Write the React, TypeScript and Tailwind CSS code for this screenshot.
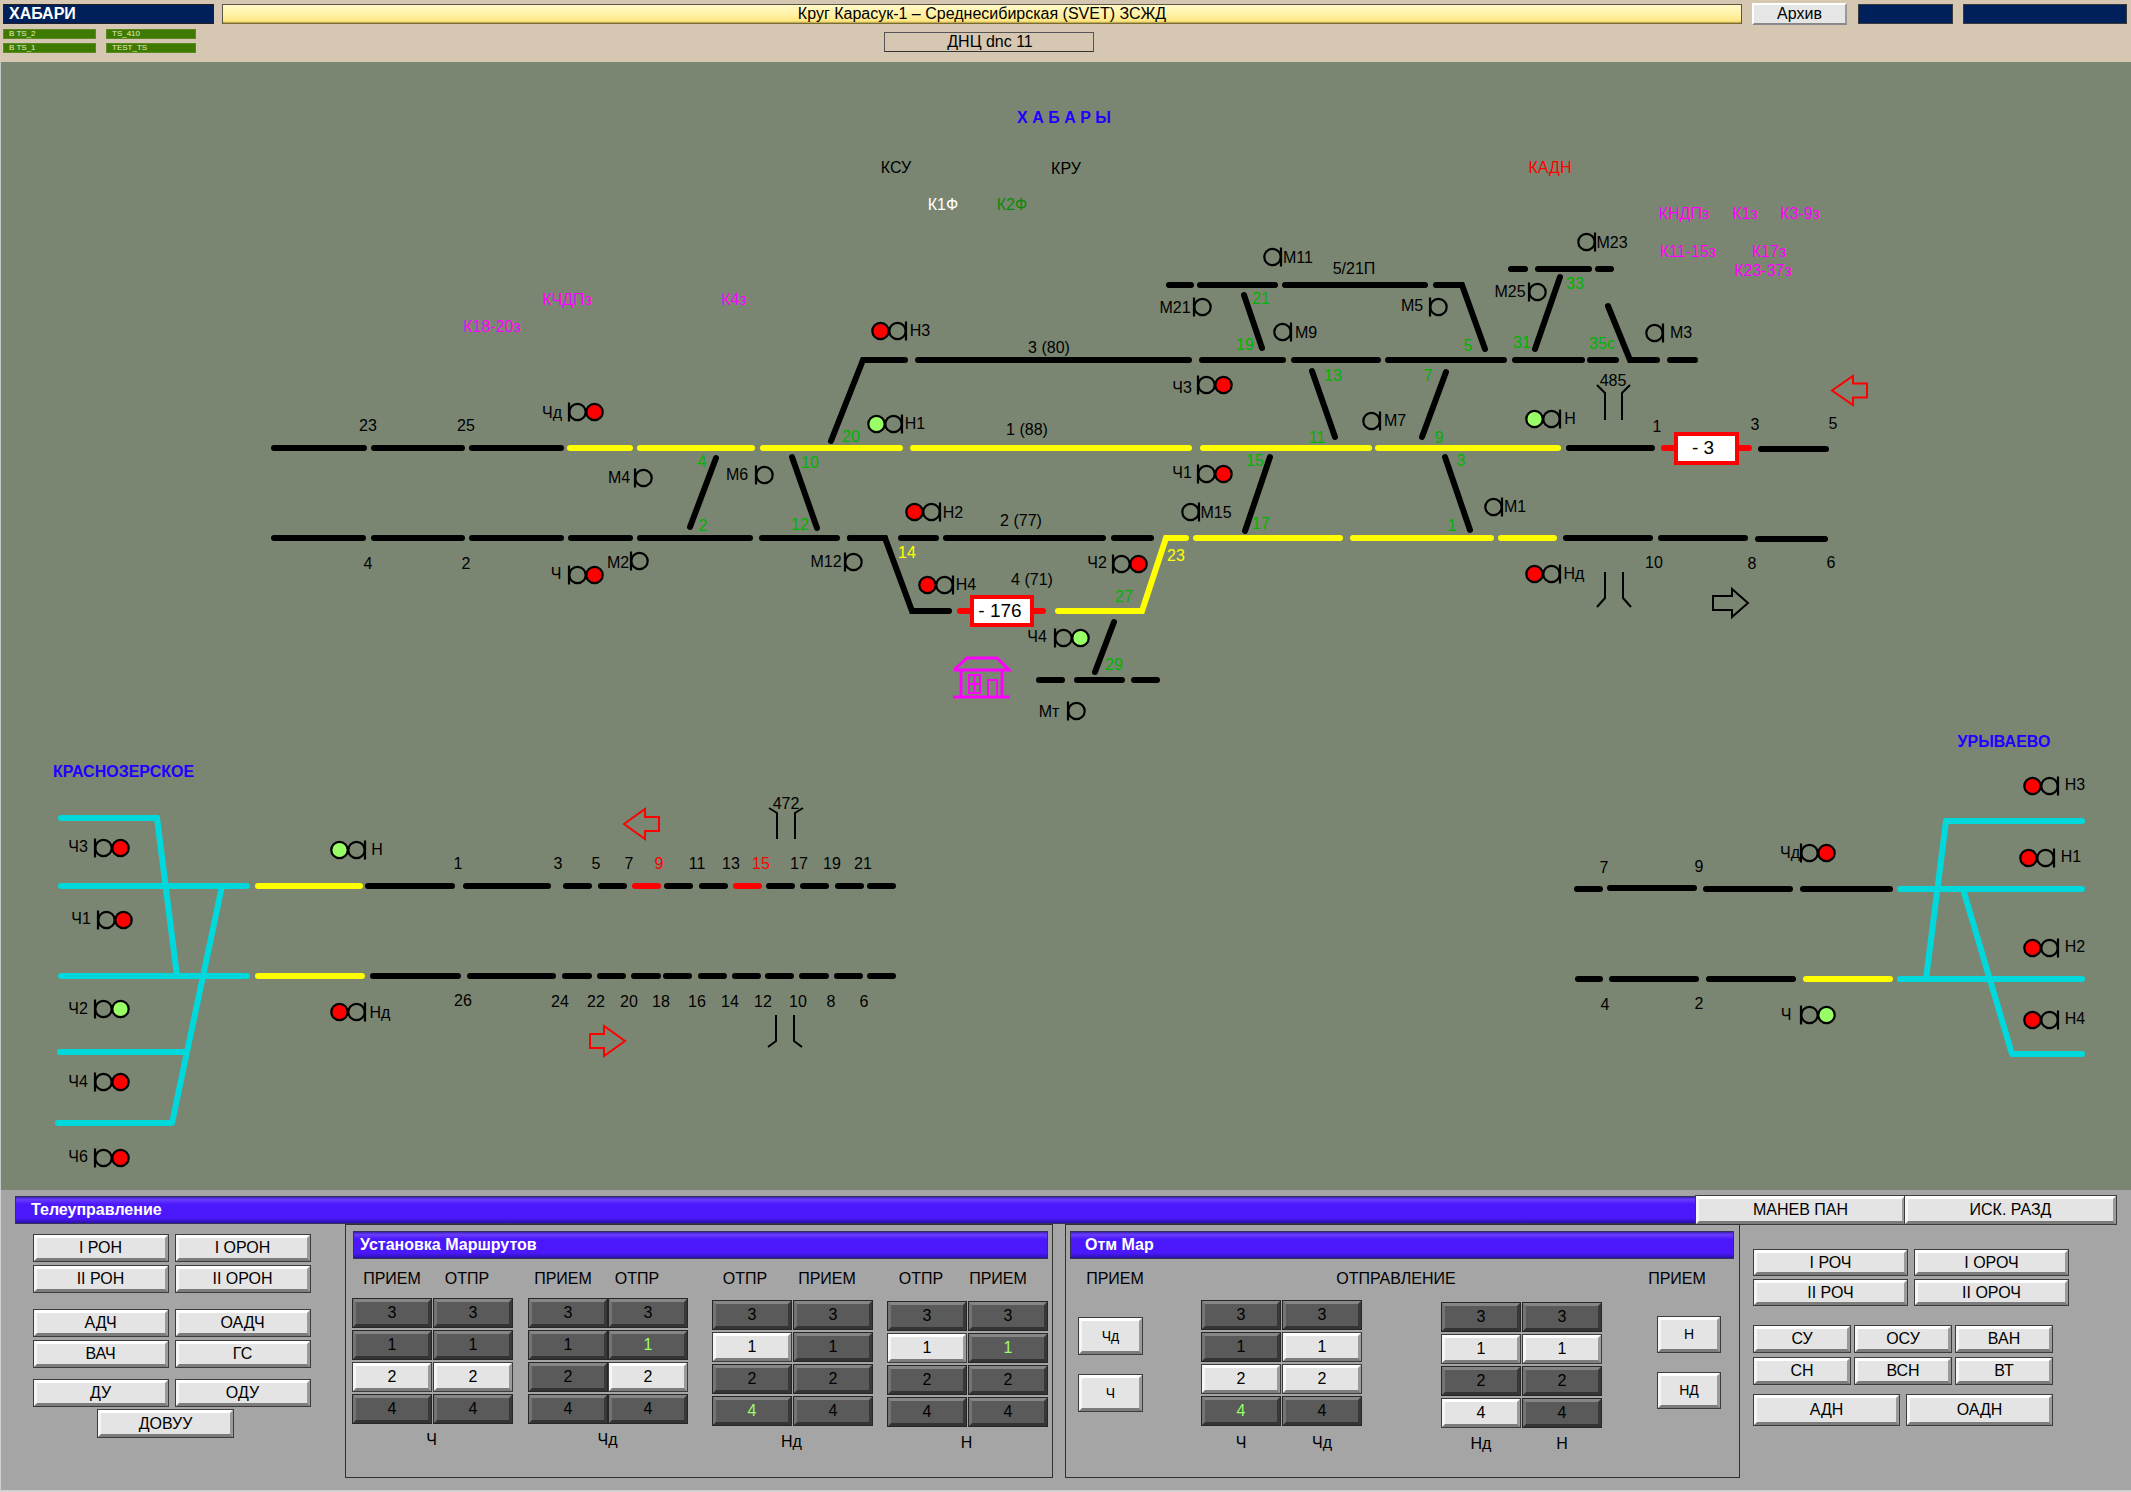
const BLK = '#000000'
const YEL = '#ffff00'
const RED = '#ff0000'
const CYAN = '#00d8dc'
const GRN = '#00b400'
const MAG = '#ff00ff'
const BLUE = '#2000ff'
const LIME = '#99ff66'

// y, x1, x2, colour: x values are the outer ends of the rounded bar
const segments: [number, number, number, string][] = [
  // row 1
  [448, 271, 367, BLK], [448, 371, 465, BLK], [448, 469, 564, BLK], [448, 567, 633, YEL], [448, 637, 755, YEL],
  [448, 760, 903, YEL], [448, 910, 1192, YEL], [448, 1200, 1372, YEL], [448, 1375, 1561, YEL], [448, 1566, 1655, BLK],
  [448, 1661, 1680, RED], [448, 1735, 1752, RED], [449, 1758, 1829, BLK],
  // row 2
  [538, 271, 366, BLK], [538, 371, 465, BLK], [538, 469, 564, BLK], [538, 568, 633, BLK], [538, 637, 753, BLK],
  [538, 759, 840, BLK], [538, 847, 888, BLK], [538, 898, 939, BLK], [538, 943, 1106, BLK], [538, 1111, 1154, BLK],
  [538, 1193, 1343, YEL], [538, 1350, 1494, YEL], [538, 1498, 1557, YEL], [538, 1563, 1653, BLK], [538, 1658, 1748, BLK],
  [539, 1755, 1828, BLK],
  // ways 3, 5 and the stub lines
  [360, 915, 1192, BLK], [360, 1199, 1286, BLK], [360, 1291, 1381, BLK], [360, 1385, 1507, BLK], [360, 1512, 1585, BLK],
  [360, 1587, 1619, BLK], [360, 1667, 1698, BLK], [285, 1166, 1194, BLK], [285, 1197, 1278, BLK], [285, 1282, 1428, BLK],
  [269, 1508, 1528, BLK], [269, 1535, 1592, BLK], [269, 1595, 1614, BLK],
  [611, 957, 975, RED], [611, 1030, 1046, RED], [680, 1036, 1065, BLK], [680, 1074, 1125, BLK], [680, 1131, 1160, BLK],
  // left station
  [818, 58, 160, CYAN], [886, 58, 250, CYAN], [976, 58, 250, CYAN], [1052, 57, 188, CYAN], [1123, 55, 174, CYAN],
  [886, 255, 363, YEL], [886, 365, 455, BLK], [886, 463, 551, BLK], [886, 563, 592, BLK], [886, 598, 627, BLK],
  [886, 632, 661, RED], [886, 664, 693, BLK], [886, 699, 728, BLK], [886, 733, 762, RED], [886, 766, 795, BLK],
  [886, 800, 829, BLK], [886, 835, 864, BLK], [886, 867, 896, BLK],
  [976, 255, 365, YEL], [976, 370, 461, BLK], [976, 467, 556, BLK], [976, 562, 592, BLK], [976, 597, 626, BLK],
  [976, 631, 661, BLK], [976, 663, 692, BLK], [976, 698, 727, BLK], [976, 732, 761, BLK], [976, 765, 794, BLK],
  [976, 799, 829, BLK], [976, 834, 863, BLK], [976, 867, 896, BLK],
  // right station
  [889, 1574, 1603, BLK], [888, 1607, 1697, BLK], [889, 1703, 1793, BLK], [889, 1800, 1893, BLK], [889, 1897, 2085, CYAN],
  [979, 1575, 1603, BLK], [979, 1609, 1699, BLK], [979, 1706, 1796, BLK], [979, 1803, 1893, YEL], [979, 1897, 2085, CYAN],
  [821, 1943, 2085, CYAN], [1054, 2010, 2085, CYAN],
]

const paths: [string, string][] = [
  ['831,441 863,360 905,360', BLK],
  ['850,538 885,538 912,611 949,611', BLK],
  ['1058,611 1142,611 1166,538 1186,538', YEL],
  ['1436,285 1462,285 1485,349', BLK],
  ['1608,306 1630,360 1657,360', BLK],
  ['1560,277 1535,349', BLK], ['1244,295 1262,348', BLK], ['1312,371 1335,437', BLK], ['1446,372 1422,437', BLK],
  ['1270,457 1245,531', BLK], ['1445,457 1470,530', BLK], ['1114,622 1095,672', BLK], ['716,458 690,527', BLK],
  ['792,457 817,528', BLK],
  ['157,818 177,976', CYAN], ['222,886 172,1123', CYAN], ['1946,821 1926,979', CYAN], ['1963,889 2012,1054', CYAN],
]

// bar x, centre y, side the lamps stand on, lit lamp
const signals: [number, number, 1 | -1, string?][] = [
  [569, 412, 1, RED], [902, 424, -1, LIME], [906, 331, -1, RED], [635, 478, 1], [756, 475, 1], [940, 512, -1, RED],
  [631, 561, 1], [569, 575, 1, RED], [845, 562, 1], [953, 585, -1, RED], [1281, 257, -1], [1595, 242, -1], [1194, 307, 1],
  [1291, 332, -1], [1430, 307, 1], [1529, 292, 1], [1198, 385, 1, RED], [1380, 421, -1], [1560, 419, -1, LIME],
  [1198, 474, 1, RED], [1199, 512, -1], [1502, 507, -1], [1113, 564, 1, RED], [1055, 638, 1, LIME], [1068, 711, 1],
  [1560, 574, -1, RED], [1663, 333, -1],
  [95, 848, 1, RED], [98, 920, 1, RED], [95, 1009, 1, LIME], [95, 1082, 1, RED], [95, 1158, 1, RED], [365, 850, -1, LIME],
  [365, 1012, -1, RED],
  [2058, 786, -1, RED], [2054, 858, -1, RED], [2058, 948, -1, RED], [2058, 1020, -1, RED], [1801, 853, 1, RED], [1801, 1015, 1, LIME],
]

const labels: [string, number, number, string?][] = [
  ['КЧДПз', 567, 299, MAG], ['К4з', 734, 299, MAG], ['К18-20з', 492, 326, MAG], ['КНДПз', 1684, 213, MAG], ['К1з', 1745, 213, MAG],
  ['К3-9з', 1800, 213, MAG], ['К11-15з', 1688, 251, MAG], ['К17з', 1769, 251, MAG], ['К23-37з', 1763, 270, MAG],
  ['КСУ', 896, 167], ['КРУ', 1066, 168], ['КАДН', 1550, 167, RED], ['К1Ф', 943, 204, '#ffffff'], ['К2Ф', 1012, 204, '#0a8a0a'],
  ['Н3', 920, 330], ['Чд', 552, 412], ['Н1', 915, 423], ['М4', 619, 477], ['М6', 737, 474], ['Н2', 953, 512], ['М2', 618, 562],
  ['Ч', 556, 573], ['М12', 826, 561], ['Н4', 966, 584], ['23', 368, 425], ['25', 466, 425], ['4', 368, 563], ['2', 466, 563],
  ['4', 702, 461, GRN], ['2', 703, 525, GRN], ['10', 810, 462, GRN], ['12', 800, 524, GRN], ['20', 851, 436, GRN], ['14', 907, 552, YEL],
  ['М11', 1298, 257], ['5/21П', 1354, 268], ['М23', 1612, 242], ['М21', 1175, 307], ['21', 1261, 298, GRN], ['19', 1245, 344, GRN],
  ['М9', 1306, 332], ['М5', 1412, 305], ['5', 1468, 345, GRN], ['М25', 1510, 291], ['33', 1575, 283, GRN], ['31', 1522, 342, GRN],
  ['35с', 1602, 343, GRN], ['3 (80)', 1049, 347], ['Ч3', 1182, 387], ['13', 1333, 375, GRN], ['7', 1428, 375, GRN], ['11', 1317, 437, GRN],
  ['9', 1439, 437, GRN], ['М7', 1395, 420], ['Н', 1570, 418], ['485', 1613, 380], ['1 (88)', 1027, 429], ['Ч1', 1182, 472],
  ['15', 1255, 460, GRN], ['3', 1461, 460, GRN], ['М15', 1216, 512], ['17', 1261, 523, GRN], ['1', 1452, 525, GRN], ['М1', 1515, 506],
  ['2 (77)', 1021, 520], ['Ч2', 1097, 562], ['23', 1176, 555, YEL], ['27', 1124, 596, GRN], ['4 (71)', 1032, 579], ['Ч4', 1037, 636],
  ['29', 1114, 664, GRN], ['Мт', 1049, 711], ['Нд', 1574, 573], ['М3', 1681, 332], ['1', 1657, 426], ['3', 1755, 424], ['5', 1833, 423],
  ['10', 1654, 562], ['8', 1752, 563], ['6', 1831, 562],
  ['Ч3', 78, 846], ['Ч1', 81, 918], ['Ч2', 78, 1008], ['Ч4', 78, 1081], ['Ч6', 78, 1156], ['Н', 377, 849], ['Нд', 380, 1012],
  ['1', 458, 863], ['26', 463, 1000], ['3', 558, 863], ['5', 596, 863], ['7', 629, 863], ['9', 659, 863, RED], ['11', 697, 863],
  ['13', 731, 863], ['15', 761, 863, RED], ['17', 799, 863], ['19', 832, 863], ['21', 863, 863], ['24', 560, 1001], ['22', 596, 1001],
  ['20', 629, 1001], ['18', 661, 1001], ['16', 697, 1001], ['14', 730, 1001], ['12', 763, 1001], ['10', 798, 1001], ['8', 831, 1001],
  ['6', 864, 1001], ['472', 786, 803],
  ['Н3', 2075, 784], ['Н1', 2071, 856], ['Н2', 2075, 946], ['Н4', 2075, 1018], ['Чд', 1790, 852], ['Ч', 1786, 1014], ['7', 1604, 867],
  ['9', 1699, 866], ['4', 1605, 1004], ['2', 1699, 1003],
]

const brackets: string[] = [
  '1597,385 1605,393 1605,420', '1630,385 1622,393 1622,420', '1597,607 1605,598 1605,572', '1631,607 1623,598 1623,572',
  '769,808 777,813 777,839', '803,808 795,813 795,839', '768,1047 776,1041 776,1015', '802,1047 794,1041 794,1015',
]

function arrow(tip: number, y: number, head: number, end: number, h: number, s: number) {
  return `${tip},${y} ${head},${y - h} ${head},${y - s} ${end},${y - s} ${end},${y + s} ${head},${y + s} ${head},${y + h}`
}

function Schematic() {
  return (
    <svg viewBox="0 62 2131 1128" className="block w-[2131px] h-[1128px] text-[16px]">
      {segments.map(([y, a, b, c], i) => (
        <line key={i} x1={a + 3} x2={b - 3} y1={y} y2={y} stroke={c} strokeWidth={6} strokeLinecap="round" />
      ))}
      {paths.map(([p, c], i) => (
        <polyline key={i} points={p} fill="none" stroke={c} strokeWidth={6} strokeLinecap="round" />
      ))}
      {brackets.map((p, i) => (
        <polyline key={i} points={p} fill="none" stroke={BLK} strokeWidth={2} />
      ))}

      {signals.map(([x, y, d, lit], i) => (
        <g key={i} fill="none" stroke={BLK} strokeWidth={2.2}>
          <line x1={x} x2={x} y1={y - 9.5} y2={y + 9.5} />
          <circle cx={x + d * 8.5} cy={y} r={8.2} />
          {lit && <circle cx={x + d * 25.5} cy={y} r={8.2} fill={lit} />}
        </g>
      ))}

      <g fill="none" stroke={RED} strokeWidth={2}>
        <polygon points={arrow(1832, 390.5, 1853, 1867, 14.5, 7)} />
        <polygon points={arrow(624, 824, 645, 659, 15, 7)} />
        <polygon points={arrow(625, 1041, 604, 590, 15, 7)} />
      </g>
      <polygon points={arrow(1748, 603, 1732, 1713, 14, 7)} fill="none" stroke={BLK} strokeWidth={2} />

      {/* counters on the blocked sections */}
      <rect x={972} y={597} width={60} height={28} fill="#ffffff" stroke={RED} strokeWidth={4} />
      <rect x={1676} y={434} width={61} height={29} fill="#ffffff" stroke={RED} strokeWidth={4} />
      <text x={1000} y={610} textAnchor="middle" dominantBaseline="central" fontSize={19}>- 176</text>
      <text x={1703} y={447} textAnchor="middle" dominantBaseline="central" fontSize={19}>- 3</text>

      {/* station house */}
      <g fill="none" stroke={MAG} strokeWidth={3}>
        <polyline points="954,670 967,658 997,658 1009,670 954,670" />
        <line x1={953} x2={1010} y1={697} y2={697} />
        <line x1={961} x2={961} y1={670} y2={697} />
        <line x1={1002} x2={1002} y1={670} y2={697} />
        <rect x={969} y={675} width={11} height={18} strokeWidth={2} />
        <line x1={974.5} x2={974.5} y1={675} y2={693} strokeWidth={2} />
        <line x1={969} x2={980} y1={684} y2={684} strokeWidth={2} />
        <polyline points="988,697 988,680 997,680 997,697" strokeWidth={2} />
      </g>

      {labels.map(([t, x, y, c], i) => (
        <text key={i} x={x} y={y} fill={c ?? BLK} textAnchor="middle" dominantBaseline="central">{t}</text>
      ))}
      <g fill={BLUE} fontWeight={700} textAnchor="middle" dominantBaseline="central">
        <text x={1064} y={117}>Х А Б А Р Ы</text>
        <text x={123.5} y={771}>КРАСНОЗЕРСКОЕ</text>
        <text x={2004} y={741}>УРЫВАЕВО</text>
      </g>
    </svg>
  )
}

const light = 'border-t-white border-l-[#f6f6f6] border-r-[#9a9a9a] border-b-[#7c7c7c] bg-[#e4e4e4] shadow-[0_0_0_1px_#3c3c3c]'
const dark = 'border-t-[#868686] border-l-[#747474] border-r-[#383838] border-b-[#343434] bg-[#5a5a5a] shadow-[0_0_0_1px_#262626]'

function Btn({ label, cls, on = true, green = false }: { label: string; cls: string; on?: boolean; green?: boolean }) {
  return (
    <div className={`flex items-center justify-center border-[3px] ${on ? light : dark} ${green ? 'text-[#99ff66]' : 'text-black'} ${cls}`}>
      {label}
    </div>
  )
}

// one column of the route keys; the strings say which keys are pressed or lit
function KeyGrid({ lit, green, gap }: { lit: number[][]; green: number[][]; gap: string }) {
  return (
    <div className={`grid grid-cols-[78px_78px] grid-rows-[28px_28px_28px_28px] gap-y-[4px] ${gap}`}>
      {[3, 1, 2, 4].map(n =>
        [0, 1].map(c => (
          <Btn key={`${n}${c}`} label={String(n)} cls="w-[78px] h-[28px]" on={lit[c].includes(n)} green={green[c].includes(n)} />
        ))
      )}
    </div>
  )
}

const routeGroups = [
  { name: 'Ч', h: ['ПРИЕМ', 'ОТПР'], ml: 'ml-0', h1: 'ml-[1px]', h2: '-ml-[1px]', top: 'mt-[10px]', gap: 'gap-x-[3px]', lit: [[2], [2]], green: [[], []] },
  { name: 'Чд', h: ['ПРИЕМ', 'ОТПР'], ml: 'ml-[17px]', h1: '-ml-[4px]', h2: '-ml-[2px]', top: 'mt-[10px]', gap: 'gap-x-[2px]', lit: [[], [2]], green: [[], [1]] },
  { name: 'Нд', h: ['ОТПР', 'ПРИЕМ'], ml: 'ml-[25px]', h1: '-ml-[6px]', h2: 'ml-[6px]', top: 'mt-[12px]', gap: 'gap-x-[3px]', lit: [[1], []], green: [[4], []] },
  { name: 'Н', h: ['ОТПР', 'ПРИЕМ'], ml: 'ml-[16px]', h1: '-ml-[5px]', h2: 'ml-[1px]', top: 'mt-[13px]', gap: 'gap-x-[3px]', lit: [[1], []], green: [[], [1]] },
]

function TitleBar({ text, cls }: { text: string; cls: string }) {
  return (
    <div className={`flex items-center border border-[#33305c] bg-[linear-gradient(#3a22b0_0,#6a3cff_10%,#4a18fa_28%,#4a18fa_82%,#2c10a8_100%)] font-bold text-[16px] text-white ${cls}`}>
      {text}
    </div>
  )
}

function Header() {
  return (
    <div className="flex h-[62px] bg-[#d6c7b2] pl-[3px] pt-[4px] text-[16px] text-black">
      <div className="w-[211px]">
        <div className="flex h-[20px] items-center border border-[#222] bg-[#00205c] pl-[5px] font-bold text-white">ХАБАРИ</div>
        <div className="mt-[5px] grid grid-cols-[93px_90px] gap-x-[10px] gap-y-[4px] text-[8px] text-[#e4f0c0]">
          {['B TS_2', 'TS_410', 'B TS_1', 'TEST_TS'].map(t => (
            <div key={t} className="flex h-[10px] items-center border border-[#5a8a20] bg-[#3f7a00] pl-[5px]">{t}</div>
          ))}
        </div>
      </div>
      <div className="ml-[8px] flex w-[1520px] flex-col items-center">
        <div className="flex h-[20px] w-full items-center justify-center border border-[#5a5540] border-b-[#7a6c30] bg-[linear-gradient(#fff9c8_0,#fff0a0_60%,#ffe680_90%,#a89848_100%)]">
          Круг Карасук-1 – Среднесибирская (SVET) ЗСЖД
        </div>
        <div className="ml-[14px] mt-[8px] flex h-[20px] w-[210px] items-center justify-center border border-[#555] border-b-[#333] pl-[2px]">ДНЦ dnc 11</div>
      </div>
      <div className="-mt-[1px] ml-[10px] flex h-[22px] w-[95px] items-center justify-center border-2 border-t-white border-l-white border-r-[#999] border-b-[#888] bg-[#e6e6e6]">Архив</div>
      <div className="ml-[11px] h-[20px] w-[95px] border border-[#3a3a3a] bg-[#00205c]"></div>
      <div className="ml-[10px] h-[20px] w-[164px] border border-[#3a3a3a] bg-[#00205c]"></div>
    </div>
  )
}

function LeftKeys() {
  const c = 'w-[134px] h-[26px]'
  return (
    <div className="w-[330px] pl-[18.5px] pt-[11px]">
      <div className="grid grid-cols-[134px_134px] gap-x-[8px] gap-y-[5px]">
        <Btn label="I РОН" cls={c} />
        <Btn label="I ОРОН" cls={c} />
        <Btn label="II РОН" cls={c} />
        <Btn label="II ОРОН" cls={c} />
      </div>
      <div className="mt-[18px] grid grid-cols-[134px_134px] gap-x-[8px] gap-y-[5px]">
        <Btn label="АДЧ" cls={c} />
        <Btn label="ОАДЧ" cls={c} />
        <Btn label="ВАЧ" cls={c} />
        <Btn label="ГС" cls={c} />
      </div>
      <div className="mt-[13px] grid grid-cols-[134px_134px] gap-x-[8px]">
        <Btn label="ДУ" cls={c} />
        <Btn label="ОДУ" cls={c} />
      </div>
      <Btn label="ДОВУУ" cls="ml-[64.5px] mt-[4px] w-[135px] h-[27px]" />
    </div>
  )
}

function RoutePanel() {
  return (
    <div className="h-[254px] w-[708px] border border-[#303030]">
      <TitleBar text="Установка Маршрутов" cls="ml-[7px] mt-[6px] h-[28px] w-[695px] pl-[6px]" />
      <div className="mt-[10px] flex pl-[7px] text-black">
        {routeGroups.map(g => (
          <div key={g.name} className={`w-[159px] ${g.ml}`}>
            <div className="flex h-[20px] items-center">
              <span className={`w-[76px] text-center ${g.h1}`}>{g.h[0]}</span>
              <span className={`w-[76px] text-center ${g.h2}`}>{g.h[1]}</span>
            </div>
            <div className={g.top}>
              <KeyGrid lit={g.lit} green={g.green} gap={g.gap} />
            </div>
            <div className="mt-[7px] pr-[2px] text-center leading-[20px]">{g.name}</div>
          </div>
        ))}
      </div>
    </div>
  )
}

function CancelPanel() {
  return (
    <div className="ml-[12px] h-[254px] w-[675px] border border-[#303030]">
      <TitleBar text="Отм Мар" cls="ml-[4px] mt-[6px] h-[28px] w-[664px] pl-[14px]" />
      <div className="mt-[10px] flex text-black">
        <div className="ml-[13px] w-[63px]">
          <div className="flex h-[20px] items-center justify-center whitespace-nowrap pl-[9px]">ПРИЕМ</div>
          <Btn label="Чд" cls="mt-[29px] w-[63px] h-[36px] text-[14px]" />
          <Btn label="Ч" cls="mt-[21px] w-[63px] h-[36px] text-[14px]" />
        </div>
        <div className="ml-[60px] w-[400px]">
          <div className="flex h-[20px] items-center justify-center pr-[12px]">ОТПРАВЛЕНИЕ</div>
          <div className="flex items-start">
            <div className="mt-[12px] w-[159px]">
              <KeyGrid lit={[[2], [1, 2]]} green={[[4], []]} gap="gap-x-[3px]" />
              <div className="mt-[8px] flex leading-[20px]">
                <span className="w-[78px] text-center">Ч</span>
                <span className="ml-[3px] w-[78px] text-center">Чд</span>
              </div>
            </div>
            <div className="ml-[81px] mt-[14px] w-[159px]">
              <KeyGrid lit={[[1, 4], [1]]} green={[[], []]} gap="gap-x-[3px]" />
              <div className="mt-[7px] flex leading-[20px]">
                <span className="w-[78px] text-center">Нд</span>
                <span className="ml-[3px] w-[78px] text-center">Н</span>
              </div>
            </div>
          </div>
        </div>
        <div className="ml-[56px] w-[62px]">
          <div className="flex h-[20px] items-center justify-center whitespace-nowrap pr-[24px]">ПРИЕМ</div>
          <Btn label="Н" cls="mt-[28px] w-[62px] h-[35px] text-[14px]" />
          <Btn label="НД" cls="mt-[21px] w-[62px] h-[35px] text-[14px]" />
        </div>
      </div>
    </div>
  )
}

function RightKeys() {
  const a = 'w-[153px] h-[25px]'
  const b = 'w-[96px] h-[26px]'
  const d = 'w-[145px] h-[30px]'
  return (
    <div className="ml-[14px] pt-[26px]">
      <div className="grid grid-cols-[153px_153px] gap-x-[8px] gap-y-[5px]">
        <Btn label="I РОЧ" cls={a} />
        <Btn label="I ОРОЧ" cls={a} />
        <Btn label="II РОЧ" cls={a} />
        <Btn label="II ОРОЧ" cls={a} />
      </div>
      <div className="mt-[21px] grid grid-cols-[96px_96px_96px] gap-x-[5px] gap-y-[6px]">
        {['СУ', 'ОСУ', 'ВАН', 'СН', 'ВСН', 'ВТ'].map(t => (
          <Btn key={t} label={t} cls={b} />
        ))}
      </div>
      <div className="mt-[11px] flex gap-[8px]">
        <Btn label="АДН" cls={d} />
        <Btn label="ОАДН" cls={d} />
      </div>
    </div>
  )
}

export default function App() {
  return (
    <div className="h-[1492px] w-[2131px] overflow-hidden text-[16px] [font-family:'Liberation_Sans',Arial,sans-serif]">
      <Header />
      <div className="h-[1128px] bg-[#7b8672] shadow-[inset_1px_0_0_#c8c8c8]">
        <Schematic />
      </div>
      <div className="h-[302px] bg-[#a5a5a5] pt-[6px] shadow-[inset_1px_0_0_#d0d0d0,inset_0_-2px_0_#d0d0d0]">
        <div className="ml-[15px] flex h-[28px]">
          <TitleBar text="Телеуправление" cls="w-[1681px] pl-[15px]" />
          <Btn label="МАНЕВ ПАН" cls="w-[209px] h-[28px]" />
          <Btn label="ИСК. РАЗД" cls="w-[211px] h-[28px]" />
        </div>
        <div className="flex">
          <div className="w-[15px]"></div>
          <LeftKeys />
          <RoutePanel />
          <CancelPanel />
          <RightKeys />
        </div>
      </div>
    </div>
  )
}
